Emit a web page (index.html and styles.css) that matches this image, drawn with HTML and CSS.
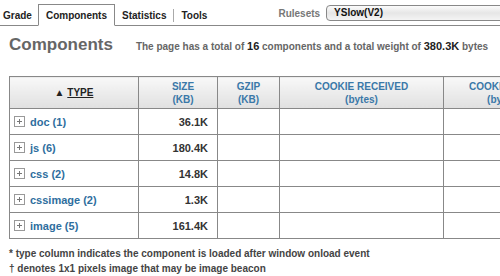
FILE: index.html
```html
<!DOCTYPE html>
<html lang="en">
<head>
    <meta charset="UTF-8">
    <title>YSlow - Components</title>
    <link rel="stylesheet" href="styles.css">
</head>
<body>
    <div class="topbar">
        <ul class="tabs">
            <li class="tab">Grade</li>
            <li class="tab active">Components</li>
            <li class="tab">Statistics</li>
            <li class="tab sep">Tools</li>
        </ul>
        <div class="rulesets">
            <span class="rulesets-label">Rulesets</span>
            <div class="select">YSlow(V2)</div>
        </div>
    </div>
    <div class="summary">
        <h1>Components</h1>
        <p>The page has a total of <b>16</b> components and a total weight of <b>380.3K</b> bytes</p>
    </div>
    <table class="components">
        <colgroup>
            <col class="col-type">
            <col class="col-size">
            <col class="col-gzip">
            <col class="col-cookie">
            <col class="col-sent">
        </colgroup>
        <thead>
            <tr>
                <th class="th-type"><span class="sorted">&#9650; <u>TYPE</u></span></th>
                <th class="th-size">SIZE<br>(KB)</th>
                <th>GZIP<br>(KB)</th>
                <th>COOKIE RECEIVED<br>(bytes)</th>
                <th>COOKIE SENT<br>(bytes)</th>
            </tr>
        </thead>
        <tbody>
            <tr><td><span class="expand"></span><a>doc (1)</a></td><td class="num">36.1K</td><td></td><td></td><td></td></tr>
            <tr><td><span class="expand"></span><a>js (6)</a></td><td class="num">180.4K</td><td></td><td></td><td></td></tr>
            <tr><td><span class="expand"></span><a>css (2)</a></td><td class="num">14.8K</td><td></td><td></td><td></td></tr>
            <tr><td><span class="expand"></span><a>cssimage (2)</a></td><td class="num">1.3K</td><td></td><td></td><td></td></tr>
            <tr><td><span class="expand"></span><a>image (5)</a></td><td class="num">161.4K</td><td></td><td></td><td></td></tr>
        </tbody>
    </table>
    <div class="notes">
        <div>* type column indicates the component is loaded after window onload event</div>
        <div>&dagger; denotes 1x1 pixels image that may be image beacon</div>
    </div>
</body>
</html>
```

FILE: styles.css
```css
body {
    margin: 0;
    font-family: "Liberation Sans", Arial, sans-serif;
    background-color: white;
    color: #333;
    width: 620px;
    overflow: hidden;
}
.topbar {
    display: flex;
    align-items: flex-end;
    height: 25px;
    border-bottom: 1px solid #888;
}
.tabs {
    display: flex;
    align-items: flex-end;
    list-style: none;
    margin: 0;
    padding: 0;
}
.tab {
    font-size: 10px;
    font-weight: bold;
    color: #222;
    padding: 0 7px 3px 7px;
    line-height: 13px;
}
.tab:first-child {
    padding-left: 3px;
    padding-right: 6px;
}
.tab.active {
    border: 1px solid #888;
    border-bottom: 1px solid white;
    margin-bottom: -1px;
    padding: 4px 7px 3px 7px;
    background-color: white;
}
.tab.sep {
    border-left: 1px solid #aaa;
    padding-left: 7px;
    margin-bottom: 3px;
    padding-bottom: 0;
}
.rulesets {
    display: flex;
    align-items: center;
    margin-left: 64px;
    margin-bottom: 4px;
}
.rulesets-label {
    font-size: 10px;
    font-weight: bold;
    color: #777;
    margin-right: 6px;
}
.select {
    width: 240px;
    height: 14px;
    border: 1px solid #888;
    border-radius: 4px;
    background: linear-gradient(#fbfbfb, #e6e6e6 50%, #f4f4f4);
    font-size: 10px;
    font-weight: bold;
    color: #111;
    padding-left: 7px;
    line-height: 14px;
}
.summary {
    display: flex;
    align-items: baseline;
    padding: 9px 9px 0 9px;
    height: 41px;
}
.summary h1 {
    margin: 0;
    font-size: 17px;
    color: #666;
    margin-right: 23px;
}
.summary p {
    margin: 0;
    font-size: 10px;
    font-weight: bold;
    color: #666;
}
.summary p b {
    font-size: 11px;
    color: #222;
}
.components {
    border-collapse: collapse;
    margin-left: 9px;
    table-layout: fixed;
    width: 554px;
}
.col-type {
    width: 129px;
}
.col-size {
    width: 79px;
}
.col-gzip {
    width: 62px;
}
.col-cookie {
    width: 164px;
}
.col-sent {
    width: 120px;
}
.components th {
    height: 31px;
    border: 1px solid #888;
    background: linear-gradient(#f8f8f8, #e0e0e0);
    font-size: 10px;
    font-weight: bold;
    color: #3a78a8;
    line-height: 13px;
    padding: 0;
}
.components th.th-type {
    color: #222;
}
.components th.th-size {
    padding-left: 10px;
}
.sorted u {
    text-decoration-thickness: 1px;
}
.components td {
    height: 25px;
    border: 1px solid #888;
    padding: 0;
    font-size: 11px;
    font-weight: bold;
}
.components td.num {
    text-align: right;
    padding-right: 9px;
    color: #333;
}
.components a {
    color: #2e6e9e;
}
.expand {
    display: inline-block;
    width: 9px;
    height: 9px;
    border: 1px solid #999;
    margin: 0 5px 0 4px;
    vertical-align: -1px;
    background:
        linear-gradient(#777, #777) center / 5px 1px no-repeat,
        linear-gradient(#777, #777) center / 1px 5px no-repeat;
}
.notes {
    padding: 7px 9px 0 9px;
    font-size: 10px;
    font-weight: bold;
    color: #444;
    line-height: 15px;
}
```
